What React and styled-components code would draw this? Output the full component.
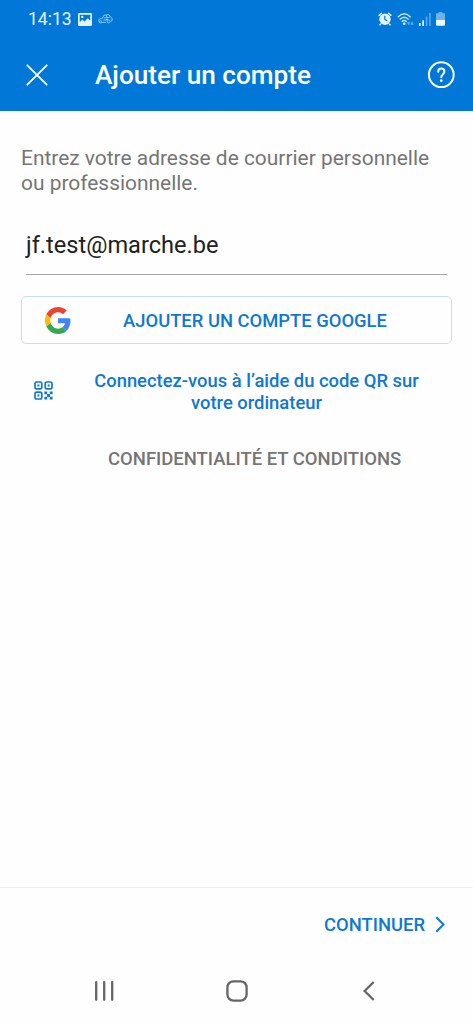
import React from "react";
import styled, { createGlobalStyle } from "styled-components";

const Global = createGlobalStyle`
  * { box-sizing: border-box; }
  body { margin: 0; background: #fefefe; font-family: Roboto, "Liberation Sans", sans-serif; }
  svg { display: block; flex: none; }
`;

const Screen = styled.div`
  display: flex;
  flex-direction: column;
  width: 100%;
  height: 1024px;
  overflow: hidden;
  background: #fefefe;
`;

const StatusBar = styled.div`
  display: flex;
  align-items: center;
  height: 38px;
  padding: 0 28px 0 28px;
  background: #0178d8;
  color: #e4f3ff;
`;

const Clock = styled.span`
  width: 50px;
  font-size: 17.5px;
  line-height: 38px;
  white-space: nowrap;
`;

const StatusIcons = styled.div`
  display: flex;
  align-items: center;
  gap: ${(p) => p.$gap}px;
  margin-left: ${(p) => (p.$end ? "auto" : 0)};
`;

const AppBar = styled.header`
  display: flex;
  align-items: center;
  height: 73px;
  padding: 0 18px 0 26px;
  background: #0178d8;
  color: #fff;
`;

const Title = styled.h1`
  flex: 1;
  margin: 1px 0 0 47px;
  font-size: 26.15px;
  line-height: 30px;
  font-weight: 500;
  white-space: nowrap;
`;

const Content = styled.main`
  display: flex;
  flex-direction: column;
  flex: 1;
  padding: 35px 21px 0;
`;

const Prompt = styled.p`
  margin: 0;
  font-size: 20.93px;
  line-height: 25px;
  color: #757575;
  white-space: nowrap;
`;

const Field = styled.div`
  height: 53px;
  margin: 26px 5px 21px;
  padding-top: 8px;
  border-bottom: 1px solid #a5a5a5;
  font-size: 23.6px;
  line-height: 30px;
  color: #212121;
`;

const GoogleButton = styled.button`
  display: flex;
  align-items: center;
  height: 48px;
  margin: 0;
  padding: 0 12px 0 23px;
  border: 1px solid #c9dff0;
  border-radius: 5px;
  background: #fefefe;
  font-family: inherit;
`;

const ActionLabel = styled.span`
  flex: 1;
  padding-top: ${(p) => p.$drop || 0}px;
  font-size: 18.4px;
  line-height: 21.5px;
  font-weight: 500;
  text-align: center;
  white-space: nowrap;
  color: #1078d0;
`;

const QrRow = styled.div`
  display: flex;
  align-items: center;
  height: 49px;
  margin-top: 22px;
  padding: 0 32px 0 13px;
  ${ActionLabel} { margin-left: 40px; }
`;

const Terms = styled.div`
  margin: 32px 0 0 87px;
  font-size: 18.48px;
  line-height: 24px;
  font-weight: 500;
  color: #757575;
  white-space: nowrap;
`;

const Footer = styled.footer`
  display: flex;
  align-items: center;
  justify-content: flex-end;
  gap: 10px;
  height: 72px;
  padding: 2px 28px 0 0;
  border-top: 1px solid #efefef;
  font-size: 18.4px;
  font-weight: 500;
  color: #1078d0;
`;

const NavBar = styled.nav`
  display: flex;
  align-items: center;
  justify-content: space-between;
  height: 65px;
  padding: 0 98px 2px 94px;
`;

const HomeSlot = styled.div`
  display: flex;
  margin-right: 4px;
`;

const PictureIcon = () => (
  <svg width="14" height="13" viewBox="0 0 14 13">
    <path fill="#e4f3ff" fillRule="evenodd" d="M1.2 0h11.6Q14 0 14 1.2v10.6q0 1.2-1.2 1.2H1.2Q0 13 0 11.8V1.2Q0 0 1.2 0zM1.7 1.8v7.4l2.6-2.7 2.2 2 3.3-3.3 2.5 2.3V1.8z" />
    <circle cx="4.3" cy="3.9" r="1.2" fill="#e4f3ff" />
  </svg>
);

const CarsIcon = () => (
  <svg width="15" height="10" viewBox="0 0 15 10" fill="none" stroke="#9bcdf5" strokeWidth="0.9" strokeLinejoin="round">
    <path d="M4.3 4.5 6 1.2 10.8.7l2 2.8 1.4 1-.2 2.4-1.2.4M4.3 4.5l-3 .6-.8 2 1.2.9M3.8 8.4h4.4" />
    <circle cx="2.7" cy="8" r="1.1" />
    <circle cx="10.6" cy="7.5" r="1.5" />
    <path d="m6 4 5.8-.7M8.3 1.2l.3 2.2M5.4 6h2.7" />
    <circle cx="9" cy="5.6" r=".8" fill="#e4f3ff" stroke="none" />
  </svg>
);

const AlarmIcon = () => (
  <svg width="14" height="14" viewBox="0 0 14 14">
    <path d="M.6 3.7 3.9.9M13.4 3.7l-3.3-2.8M2.8 11.8l-1.3 1.6M11.2 11.8l1.3 1.6" stroke="#e4f3ff" strokeWidth="1.5" />
    <circle cx="7" cy="7.2" r="5.7" fill="#e4f3ff" />
    <path d="M6.8 3.8v3.6l2.5 1.4" fill="none" stroke="#0178d8" strokeWidth="1.2" />
  </svg>
);

const WifiIcon = () => (
  <svg width="17" height="13" viewBox="0 0 17 13" fill="none" stroke="#c5e3fb" strokeWidth="1.4">
    <path d="M.7 4.2q6.5-6.8 13 0M2.7 6.6q4.5-4.6 9 0M4.7 8.8q2.5-2.4 5 0" />
    <circle cx="7.2" cy="10.8" r="1.3" fill="#e4f3ff" stroke="none" />
    <g fill="#62adeb" stroke="none">
      <path d="M9.9 9h3.4l-1.7 3.6zM13.3 11.7 15 8.3l1.7 3.4z" />
    </g>
  </svg>
);

const SignalIcon = () => (
  <svg width="12" height="13" viewBox="0 0 12 13">
    <path fill="#e4f3ff" d="M0 10h1.7v3H0zM3.3 7.2H5V13H3.3z" />
    <path fill="#55a5e8" d="M6.7 3.6h1.7V13H6.7zM10.1 0h1.7v13h-1.7z" />
  </svg>
);

const BatteryIcon = () => (
  <svg width="9" height="14" viewBox="0 0 9 14">
    <path fill="#6bb2ee" d="M2.7 0h3.6v1.3H8q1 0 1 1V8H0V2.3q0-1 1-1h1.7z" />
    <path fill="#eef8ff" d="M0 8h9v4.7q0 1-1 1H1q-1 0-1-1z" />
  </svg>
);

const CloseIcon = () => (
  <svg width="22" height="22" viewBox="0 0 22 22">
    <path d="M1.3 1.3 20.7 20.7M20.7 1.3 1.3 20.7" stroke="#fff" strokeWidth="1.8" strokeLinecap="round" />
  </svg>
);

const HelpIcon = () => (
  <svg width="28" height="28" viewBox="0 0 28 28" fill="none" stroke="#fff" strokeWidth="2">
    <circle cx="14.3" cy="13.7" r="12.4" />
    <path d="M11.2 10.8c0-2 1.3-3.3 3.1-3.3s3.1 1.2 3.1 3c0 2.8-3.1 3-3.1 5.8" strokeLinecap="round" />
    <circle cx="14.3" cy="19.7" r="1.35" fill="#fff" stroke="none" />
  </svg>
);

const GoogleIcon = () => (
  <svg width="26" height="27" viewBox="0 0 48 48" preserveAspectRatio="none">
    <path fill="#ea4335" d="M24 9.5c3.54 0 6.71 1.22 9.21 3.6l6.85-6.85C35.9 2.38 30.47 0 24 0 14.62 0 6.51 5.38 2.56 13.22l7.98 6.19C12.43 13.72 17.74 9.5 24 9.5z" />
    <path fill="#4285f4" d="M46.98 24.55c0-1.57-.15-3.09-.38-4.55H24v9.02h12.94c-.58 2.96-2.26 5.48-4.78 7.18l7.73 6c4.51-4.18 7.09-10.36 7.09-17.65z" />
    <path fill="#fbbc05" d="M10.53 28.59a14.5 14.5 0 0 1 0-9.18l-7.98-6.19a24 24 0 0 0 0 21.56l7.98-6.19z" />
    <path fill="#34a853" d="M24 48c6.48 0 11.93-2.13 15.89-5.81l-7.73-6c-2.15 1.45-4.92 2.3-8.16 2.3-6.26 0-11.57-4.22-13.47-9.91l-7.98 6.19C6.51 42.62 14.62 48 24 48z" />
  </svg>
);

const QrIcon = () => (
  <svg width="19" height="19" viewBox="0 0 19 19" fill="none" stroke="#1078d0" strokeWidth="1.7">
    <rect x="1" y="1" width="6.8" height="6.8" rx="1.7" />
    <rect x="11.2" y="1" width="6.8" height="6.8" rx="1.7" />
    <rect x="1" y="11.2" width="6.8" height="6.8" rx="1.7" />
    <g fill="#1078d0" stroke="none">
      <path d="M3.4 3.4h2v2h-2zM13.6 3.4h2v2h-2zM3.4 13.6h2v2h-2z" />
      <path d="M10.4 10.4h2.8v2.8h-2.8zM15.8 10.4h2.8v2.8h-2.8zM13.1 13.1h2.8v2.8h-2.8zM10.4 15.8h2.8v2.8h-2.8zM15.8 15.8h2.8v2.8h-2.8z" />
    </g>
  </svg>
);

const NextIcon = () => (
  <svg width="10" height="17" viewBox="0 0 10 17">
    <path d="M1.3 1.2 8.5 8.5 1.3 15.8" fill="none" stroke="#1078d0" strokeWidth="2" />
  </svg>
);

const RecentsIcon = () => (
  <svg width="20" height="20" viewBox="0 0 20 20">
    <path d="M2.2 1.2v17.6M10.2 1.2v17.6M18.2 1.2v17.6" stroke="#656565" strokeWidth="2.3" strokeLinecap="round" />
  </svg>
);

const HomeIcon = () => (
  <svg width="22" height="22" viewBox="0 0 22 22">
    <rect x="1.4" y="1.4" width="19.2" height="19.2" rx="6" fill="none" stroke="#656565" strokeWidth="2.3" />
  </svg>
);

const BackIcon = () => (
  <svg width="12" height="20" viewBox="0 0 12 20">
    <path d="M10.7 1 1.6 10l9.1 9" fill="none" stroke="#656565" strokeWidth="2.3" />
  </svg>
);

export default function App() {
  return (
    <Screen>
      <Global />
      <StatusBar>
        <Clock>14:13</Clock>
        <StatusIcons $gap={6}>
          <PictureIcon />
          <CarsIcon />
        </StatusIcons>
        <StatusIcons $gap={5} $end>
          <AlarmIcon />
          <WifiIcon />
          <SignalIcon />
          <BatteryIcon />
        </StatusIcons>
      </StatusBar>
      <AppBar>
        <CloseIcon />
        <Title>Ajouter un compte</Title>
        <HelpIcon />
      </AppBar>
      <Content>
        <Prompt>
          Entrez votre adresse de courrier personnelle
          <br />
          ou professionnelle.
        </Prompt>
        <Field>jf.test@marche.be</Field>
        <GoogleButton>
          <GoogleIcon />
          <ActionLabel $drop={2}>AJOUTER UN COMPTE GOOGLE</ActionLabel>
        </GoogleButton>
        <QrRow>
          <QrIcon />
          <ActionLabel $drop={2}>
            Connectez-vous à l’aide du code QR sur
            <br />
            votre ordinateur
          </ActionLabel>
        </QrRow>
        <Terms>CONFIDENTIALITÉ ET CONDITIONS</Terms>
      </Content>
      <Footer>
        <span>CONTINUER</span>
        <NextIcon />
      </Footer>
      <NavBar>
        <RecentsIcon />
        <HomeSlot>
          <HomeIcon />
        </HomeSlot>
        <BackIcon />
      </NavBar>
    </Screen>
  );
}
